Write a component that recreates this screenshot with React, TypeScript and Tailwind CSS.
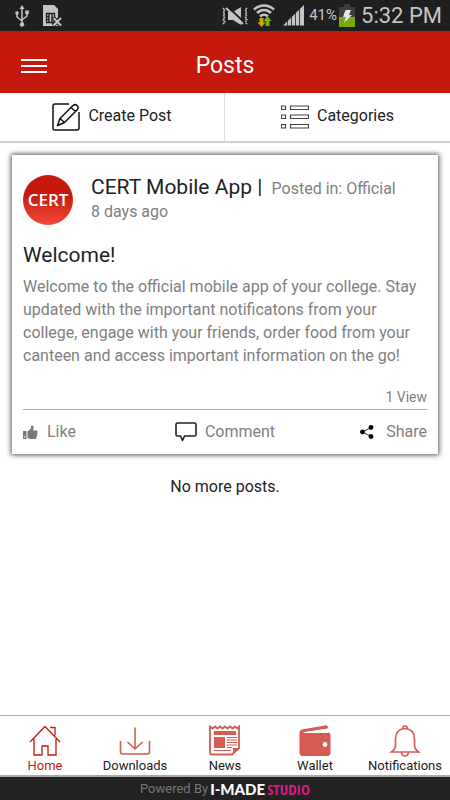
import { ReactNode, useState } from 'react';

function StatusBar() {
  return (
    <div className="flex h-[31px] items-center bg-[#1f1f1f] pl-[15px] pr-2 text-[#c4c4c4]">
      <svg width="14" height="22" viewBox="0 0 14 22" fill="none" stroke="currentColor" strokeWidth="1.5">
        <path d="M7 3v16M2 8v4l5 4M12 8v3l-5 4" />
        <path d="M7 0l2.5 4h-5z" fill="currentColor" stroke="none" />
        <circle cx="7" cy="19.5" r="2.2" fill="currentColor" stroke="none" />
        <circle cx="2" cy="8" r="1.8" fill="currentColor" stroke="none" />
        <rect x="10.2" y="5.5" width="3.6" height="3.6" fill="currentColor" stroke="none" />
      </svg>
      <svg className="ml-[14px]" width="19" height="22" viewBox="0 0 19 22">
        <path d="M0 0h11l4 4v17H0z" fill="currentColor" />
        <path d="M3.5 8.5h8v9h-8zM6 8.5v9M9 8.5v9M3.5 11.5h3M3.5 14.5h3M9 13h3" fill="none" stroke="#1f1f1f" strokeWidth="1.3" />
        <path d="M10 12.5l8 8M18 12.5l-8 8" stroke="#1f1f1f" strokeWidth="4" />
        <path d="M10.5 13l7.5 7.5M18 13l-7.5 7.5" stroke="currentColor" strokeWidth="2" />
      </svg>
      <div className="ml-auto flex items-center">
        {/* sound off */}
        <svg width="26" height="18" viewBox="0 0 26 18" fill="none" stroke="currentColor">
          <path d="M1 1l2 2-2 2 2 2-2 2 2 2-2 2 2 2-2 2M25 1l-2 2 2 2-2 2 2 2-2 2 2 2-2 2 2 2" strokeWidth="1.5" strokeDasharray="2 1" />
          <path d="M6 5h5l8-5v18l-8-5H6z" fill="currentColor" stroke="none" />
          <path d="M6 0l17 16" stroke="#1f1f1f" strokeWidth="2" />
          <path d="M4 1l17 16" strokeWidth="1.8" />
        </svg>
        {/* wifi with traffic arrows */}
        <svg className="ml-[5px]" width="22" height="23" viewBox="0 0 22 23" fill="none" stroke="currentColor" strokeWidth="2.6">
          <path d="M1 5.5C7 .2 15 .2 21 5.5M4 9c4-4 10-4 14 0M7 12.5c2.5-2.2 5.500-2.200 8 0" />
          <path d="M6.5 14v4.500H4.500L8.500 23l4-4.500h-2V14z" fill="#d9a300" stroke="none" />
          <path d="M12.500 22v-5h-2l4-5 4 5h-2v5z" fill="#6fb50a" stroke="none" />
        </svg>
        <svg className="ml-2" width="22" height="21" viewBox="0 0 22 21">
          <path d="M0 20.500L21 0v20.500z" fill="currentColor" />
          <path d="M4.500 10v11M8.500 8v13M12.500 5v16M16.500 2v19" stroke="#1f1f1f" strokeWidth="0.800" />
        </svg>
        <span className="ml-1 text-[15px]">41%</span>
        <svg className="ml-[2px]" width="16" height="23" viewBox="0 0 16 23">
          <path d="M5 0h6v3h5v20H0V3h5z" fill="#3d3d3d" />
          <path d="M0 13h16v10H0z" fill="#77ab0c" />
          <path d="M6.500 6h5.500L10 11h3l-8 8 2-6H4z" fill="#e8e8e8" />
        </svg>
        <span className="ml-[6px] text-[22px]">5:32 PM</span>
      </div>
    </div>
  );
}

function PencilIcon() {
  return (
    <svg width="28" height="28" viewBox="0 0 28 28" fill="none" stroke="#111" strokeWidth="1.5" strokeLinejoin="round">
      <path d="M17 1H3Q1 1 1 3V25Q1 27 3 27H25Q27 27 27 25V9" />
      <path d="M5.500 22.500L8 15.500 21 2.500Q23 .8 25 2.500T25.500 6.500L12.500 19.500zM8 15.500l4.500 4M19 4.500l4.500 4" />
    </svg>
  );
}

function ListIcon() {
  return (
    <svg width="28" height="24" viewBox="0 0 28 24" fill="none" stroke="#444" strokeWidth="1.200">
      <path d="M.5 1h4v3.500h-4zM9.500 1h18v3.500h-18zM.5 10h4v3.500h-4zM9.500 10h18v3.500h-18zM.5 19.500h4V23h-4zM9.500 19.500h18V23h-18z" />
    </svg>
  );
}

function LikeIcon() {
  return (
    <svg width="15" height="15" viewBox="0 0 15 15" fill="#777">
      <path d="M0 6h3.500v8H0z" />
      <path d="M4.500 6.500L8 3.500V1.500Q8 .2 9.300.5Q11 1 10.500 3.500L10 5.500h3.500Q15 6 14.500 7.500L13.500 12.500Q13 14 11.500 14H7.500L4.500 13z" />
      <circle cx="1.800" cy="11.800" r=".7" fill="#fff" />
    </svg>
  );
}

function CommentIcon() {
  return (
    <svg width="22" height="20" viewBox="0 0 22 20" fill="none" stroke="#222" strokeWidth="1.600" strokeLinejoin="round">
      <path d="M2.500 1h17q1.500 0 1.500 1.500v10q0 1.500-1.500 1.500H9.500L7.500 18.500 5.500 14h-3Q1 14 1 12.500v-10Q1 1 2.500 1z" />
    </svg>
  );
}

function ShareIcon() {
  return (
    <svg width="14" height="14" viewBox="0 0 14 14">
      <path d="M11 2.500L2.500 7l8.500 4.500" fill="none" stroke="#000" strokeWidth="0.800" />
      <circle cx="11" cy="2.500" r="2.400" />
      <circle cx="2.500" cy="7" r="2.400" />
      <circle cx="11" cy="11.500" r="2.400" />
    </svg>
  );
}

const tabs: { label: string; icon: ReactNode }[] = [
  {
    label: 'Home',
    icon: (
      <svg width="32" height="32" viewBox="0 0 32 32" fill="none" stroke="#c4190c" strokeWidth="1.300">
        <path d="M1 17L16 1.500 31 17M5 14v16h8v-9h6v9h8V14M21 2.500h5v8" />
      </svg>
    ),
  },
  {
    label: 'Downloads',
    icon: (
      <svg width="32" height="32" viewBox="0 0 32 32" fill="none" stroke="#d65b52" strokeWidth="1.600">
        <path d="M1.500 16v11q0 2 2 2h25q2 0 2-2V16M16 2.500v21M8.500 17l7.500 7 7.500-7" />
      </svg>
    ),
  },
  {
    label: 'News',
    icon: (
      <svg width="32" height="32" viewBox="0 0 32 32" fill="none" stroke="#d65b52" strokeWidth="1.800">
        <path d="M1 1.500l2.500 2 2.500-2 2.500 2 2.500-2 2.500 2 2.500-2 2.500 2 2.500-2 2.500 2 2.500-2 2.500 2 1.500-2V23l-7 6.500H3q-2 0-2-2z" />
        <path d="M31 23l-7 6.500V23zM5 6h22v4H5zM5 12h11v11H5z" fill="#d65b52" stroke="none" />
        <path d="M18 12.500h10M18 15h10M18 17.500h10M18 20h10M18 22.500h5M5 25.500h17" strokeWidth="1.200" />
      </svg>
    ),
  },
  {
    label: 'Wallet',
    icon: (
      <svg width="32" height="32" viewBox="0 0 32 32" fill="#d65b52">
        <path d="M.5 7Q.5 5 3 4.500L27 .2Q29 .2 29 3.500L6 7.500H29Q31.500 7.500 31.500 10V28Q31.500 31 28 31H4Q.5 31 .5 28z" />
        <path d="M4 7.200L29 3.500V8H6z" fill="#fff" />
        <circle cx="26" cy="19.500" r="2.400" fill="#fff" />
      </svg>
    ),
  },
  {
    label: 'Notifications',
    icon: (
      <svg width="32" height="32" viewBox="0 0 32 32" fill="none" stroke="#d65b52" strokeWidth="1.700">
        <path d="M16 3.500C9 4 6.500 8 6.500 14v6q0 4-4 7h27q-4-3-4-7v-6C25.500 8 23 4 16 3.500z" />
        <path d="M13.500 4q0-3 2.500-3t2.500 3M12.500 27.500q.5 3.500 3.500 3.500t3.500-3.500" />
      </svg>
    ),
  },
];

export default function App() {
  const [active, setActive] = useState('Home');

  return (
    <div className="flex min-h-screen flex-col bg-white font-['Roboto',sans-serif] text-[#222]">
      <StatusBar />

      <header className="grid h-[62px] grid-cols-[1fr_auto_1fr] items-center bg-[#c4190c] px-[21px] pt-2 text-white">
        <button aria-label="Menu" className="flex w-[26px] flex-col gap-1">
          <span className="h-[2px] bg-white"></span>
          <span className="h-[2px] bg-white"></span>
          <span className="h-[2px] bg-white"></span>
        </button>
        <h1 className="text-[23px]">Posts</h1>
      </header>

      {/* Actions */}
      <div className="grid h-[50px] grid-cols-2 border-b-2 border-[#d0d0d0] text-[16px]">
        <button className="flex items-center justify-center gap-2 border-r border-[#ddd]">
          <PencilIcon />
          <span className="pb-[3px]">Create Post</span>
        </button>
        <button className="flex items-center justify-center gap-2">
          <ListIcon />
          <span className="pb-[3px]">Categories</span>
        </button>
      </div>

      <main className="flex-1 px-3 pt-3">
        <article className="bg-white px-[11px] pt-5 shadow-[0_0_5px_1px_#555]">
          <div className="flex gap-[18px]">
            <div className="flex size-[50px] shrink-0 items-center justify-center rounded-full bg-linear-to-b from-[#c4190c] from-40% to-[#f5483a] font-['Open_Sans',sans-serif] text-[17px] font-semibold text-white">
              CERT
            </div>
            <div className="text-[16px] text-[#808080]">
              <h2 className="leading-6">
                <span className="mr-1 text-[21px] text-[#222]">CERT Mobile App | </span>
                Posted in: Official
              </h2>
              <p className="leading-[22px]">8 days ago</p>
            </div>
          </div>
          <h3 className="mt-4 text-[21px] leading-7">Welcome!</h3>
          <p className="mt-[6px] text-[16px] leading-[23px] text-[#808080]">
            Welcome to the official mobile app of your college. Stay updated with the important notificatons
            from your college, engage with your friends, order food from your canteen and access important
            information on the go!
          </p>
          <p className="mt-5 border-b border-[#aaa] pb-[2px] text-right text-[14px] leading-5 text-[#808080]">
            1 View
          </p>
          <div className="grid h-11 grid-cols-[1fr_auto_1fr] text-[16px] text-[#808080]">
            <button className="flex items-center gap-[9px]">
              <LikeIcon />
              <span>Like</span>
            </button>
            <button className="flex items-center gap-2">
              <CommentIcon />
              <span>Comment</span>
            </button>
            <button className="flex items-center justify-end gap-3">
              <ShareIcon />
              <span>Share</span>
            </button>
          </div>
        </article>
        <p className="mt-[21px] text-center text-[16px] leading-6">No more posts.</p>
      </main>

      <nav className="grid h-[62px] grid-cols-5 border-t border-b-2 border-[#aaa]">
        {tabs.map((tab) => (
          <a
            key={tab.label}
            href={`#${tab.label}`}
            onClick={() => setActive(tab.label)}
            className={`flex flex-col items-center pt-[9px] text-[13px] leading-[18px] ${
              active === tab.label ? 'text-[#c4190c]' : 'text-[#222]'
            }`}
          >
            {tab.icon}
            {tab.label}
          </a>
        ))}
      </nav>
      <footer className="flex h-[23px] items-center justify-center gap-[2px] bg-[#222] text-[13px] text-[#777]">
        Powered By
        <span className="pt-[2px] font-['Lato',sans-serif] text-[15px] font-black text-white">I-MADE</span>
        <span className="pt-[2px] font-['Open_Sans_Condensed','Open_Sans',sans-serif] text-[15px] font-bold text-[#d81b86]">
          STUDIO
        </span>
      </footer>
    </div>
  );
}
